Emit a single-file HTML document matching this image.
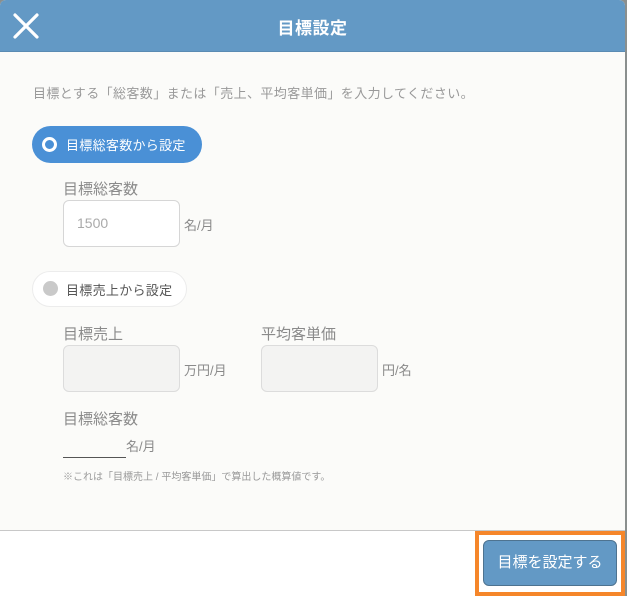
<!DOCTYPE html><html><head><meta charset="utf-8"><style>
*{margin:0;padding:0;box-sizing:border-box}
body{width:627px;height:596px;background:#8a8f8e;font-family:"Liberation Sans","Noto Sans CJK JP",sans-serif;position:relative;overflow:hidden}
.m{position:absolute;left:0;top:0;width:625px;height:596px;background:#fbfbf9;border-radius:6px 6px 0 0;overflow:hidden}
.h{position:absolute;left:0;top:0;width:625px;height:52px;background:#6399c5;border-bottom:1px solid #5a8bb3}
.h .t{position:absolute;left:0;width:625px;top:14px;text-align:center;color:#fff;font-size:17px;font-weight:bold;letter-spacing:0.5px}
.a{position:absolute;color:#8a8a8a;white-space:nowrap}
.f{position:absolute;left:0;top:530px;width:625px;height:66px;background:#fff;border-top:1px solid #c8c8c8}
.in{position:absolute;border:1px solid #d6d6d6;border-radius:6px;background:#fff}
.dis{background:#f3f3f2;border-color:#dcdcdc}
</style></head><body><div class="m">
<div class="h"><svg style="position:absolute;left:13px;top:13px" width="26" height="26"><path d="M2 2L24 24M24 2L2 24" stroke="#fff" stroke-width="3.2" stroke-linecap="round"/></svg><div class="t">目標設定</div></div>
<div class="a" style="left:33px;top:83px;font-size:13px;letter-spacing:0.4px;color:#999">目標とする「総客数」または「売上、平均客単価」を入力してください。</div>
<div style="position:absolute;left:32px;top:126px;width:170px;height:37px;border-radius:19px;background:#4a90d6"></div>
<div style="position:absolute;left:42px;top:137px;width:15px;height:15px;border-radius:50%;border:3px solid #fff"></div>
<div class="a" style="left:66px;top:135px;font-size:13px;letter-spacing:0.3px;color:#fff">目標総客数から設定</div>
<div class="a" style="left:63px;top:178px;font-size:15px">目標総客数</div>
<div class="in" style="left:63px;top:200px;width:117px;height:47px"></div>
<div class="a" style="left:77px;top:215px;font-size:14px;color:#aaa">1500</div>
<div class="a" style="left:184px;top:215px;font-size:13px">名/月</div>
<div style="position:absolute;left:32px;top:271px;width:155px;height:36px;border-radius:18px;background:#fff;border:1px solid #ececec"></div>
<div style="position:absolute;left:43px;top:281px;width:15px;height:15px;border-radius:50%;background:#c9c9c9"></div>
<div class="a" style="left:66px;top:280px;font-size:13px;letter-spacing:0.3px;color:#555">目標売上から設定</div>
<div class="a" style="left:63px;top:323px;font-size:15px">目標売上</div>
<div class="in dis" style="left:63px;top:345px;width:117px;height:47px"></div>
<div class="a" style="left:184px;top:360px;font-size:13px">万円/月</div>
<div class="a" style="left:261px;top:323px;font-size:15px">平均客単価</div>
<div class="in dis" style="left:261px;top:345px;width:117px;height:47px"></div>
<div class="a" style="left:382px;top:360px;font-size:13px">円/名</div>
<div class="a" style="left:63px;top:408px;font-size:15px">目標総客数</div>
<div class="a" style="left:126px;top:436px;font-size:13px">名/月</div>
<div style="position:absolute;left:63px;top:457px;width:63px;height:1px;background:#555"></div>
<div class="a" style="left:63px;top:468px;font-size:10px;color:#999">※これは「目標売上 / 平均客単価」で算出した概算値です。</div>
<div class="f"></div>
<div style="position:absolute;left:475px;top:531px;width:150px;height:65px;border:4px solid #f5862a"></div>
<div style="position:absolute;left:483px;top:540px;width:134px;height:46px;border-radius:6px;background:#6399c5;border:1px solid #4e7390;color:#fff;font-size:15px;text-align:center;line-height:44px">目標を設定する</div>
</div></body></html>
